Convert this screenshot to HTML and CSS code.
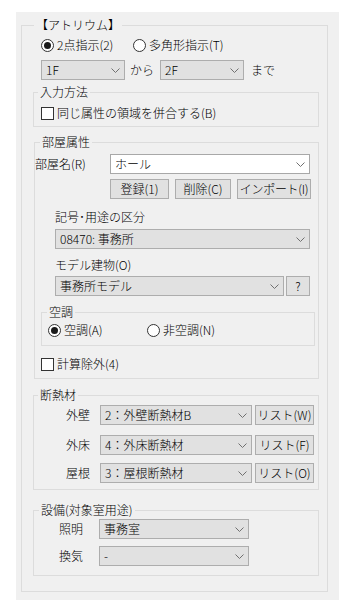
FILE: index.html
```html
<!DOCTYPE html>
<html lang="ja">
<head>
<meta charset="utf-8">
<link rel="stylesheet" href="styles.css">
</head>
<body>
<div class="panel">
  <fieldset class="grp g-outer">
    <legend class="lg lg-outer">【アトリウム】</legend>
    <div class="row r-mode">
      <label class="opt opt-first"><span class="radio on"></span>2点指示(2)</label>
      <label class="opt"><span class="radio"></span>多角形指示(T)</label>
    </div>
    <div class="row r-floor">
      <div class="combo c-floor"><span>1F</span><svg class="chev" width="9" height="5" viewBox="0 0 9 5"><path d="M0.5 0.5 L4.5 4.5 L8.5 0.5" fill="none" stroke="#707070"/></svg></div>
      <span class="t-kara">から</span>
      <div class="combo c-floor"><span>2F</span><svg class="chev" width="9" height="5" viewBox="0 0 9 5"><path d="M0.5 0.5 L4.5 4.5 L8.5 0.5" fill="none" stroke="#707070"/></svg></div>
      <span class="t-made">まで</span>
    </div>

    <fieldset class="grp g-input">
      <legend class="lg lg-input">入力方法</legend>
      <label class="opt r-merge"><span class="check"></span>同じ属性の領域を併合する(B)</label>
    </fieldset>

    <fieldset class="grp g-room">
      <legend class="lg lg-room">部屋属性</legend>
      <div class="row r-name">
        <span class="lbl-name">部屋名(R)</span>
        <div class="combo white c-name"><span>ホール</span><svg class="chev" width="9" height="5" viewBox="0 0 9 5"><path d="M0.5 0.5 L4.5 4.5 L8.5 0.5" fill="none" stroke="#707070"/></svg></div>
      </div>
      <div class="row r-btns">
        <button class="btn b-reg">登録(1)</button>
        <button class="btn b-del">削除(C)</button>
        <button class="btn b-imp">インポート(I)</button>
      </div>
      <div class="sub-lbl s-use">記号･用途の区分</div>
      <div class="combo c-use"><span>08470: 事務所</span><svg class="chev" width="9" height="5" viewBox="0 0 9 5"><path d="M0.5 0.5 L4.5 4.5 L8.5 0.5" fill="none" stroke="#707070"/></svg></div>
      <div class="sub-lbl s-model">モデル建物(O)</div>
      <div class="row r-model">
        <div class="combo c-model"><span>事務所モデル</span><svg class="chev" width="9" height="5" viewBox="0 0 9 5"><path d="M0.5 0.5 L4.5 4.5 L8.5 0.5" fill="none" stroke="#707070"/></svg></div>
        <button class="btn b-q">?</button>
      </div>

      <fieldset class="grp g-air">
        <legend class="lg lg-air">空調</legend>
        <div class="row r-air">
          <label class="opt opt-air"><span class="radio on"></span>空調(A)</label>
          <label class="opt"><span class="radio"></span>非空調(N)</label>
        </div>
      </fieldset>

      <label class="opt r-excl"><span class="check"></span>計算除外(4)</label>
    </fieldset>

    <fieldset class="grp g-ins">
      <legend class="lg lg-ins">断熱材</legend>
      <div class="row r-ins r-ins1">
        <span class="lbl-ins">外壁</span>
        <div class="combo c-ins"><span>2：外壁断熱材B</span><svg class="chev" width="9" height="5" viewBox="0 0 9 5"><path d="M0.5 0.5 L4.5 4.5 L8.5 0.5" fill="none" stroke="#707070"/></svg></div>
        <button class="btn b-list">リスト(W)</button>
      </div>
      <div class="row r-ins r-ins2">
        <span class="lbl-ins">外床</span>
        <div class="combo c-ins"><span>4：外床断熱材</span><svg class="chev" width="9" height="5" viewBox="0 0 9 5"><path d="M0.5 0.5 L4.5 4.5 L8.5 0.5" fill="none" stroke="#707070"/></svg></div>
        <button class="btn b-list">リスト(F)</button>
      </div>
      <div class="row r-ins r-ins3">
        <span class="lbl-ins">屋根</span>
        <div class="combo c-ins"><span>3：屋根断熱材</span><svg class="chev" width="9" height="5" viewBox="0 0 9 5"><path d="M0.5 0.5 L4.5 4.5 L8.5 0.5" fill="none" stroke="#707070"/></svg></div>
        <button class="btn b-list">リスト(O)</button>
      </div>
    </fieldset>

    <fieldset class="grp g-eq">
      <legend class="lg lg-eq">設備(対象室用途)</legend>
      <div class="row r-eq r-eq1">
        <span class="lbl-eq">照明</span>
        <div class="combo c-eq"><span>事務室</span><svg class="chev" width="9" height="5" viewBox="0 0 9 5"><path d="M0.5 0.5 L4.5 4.5 L8.5 0.5" fill="none" stroke="#707070"/></svg></div>
      </div>
      <div class="row r-eq r-eq2">
        <span class="lbl-eq">換気</span>
        <div class="combo c-eq"><span>-</span><svg class="chev" width="9" height="5" viewBox="0 0 9 5"><path d="M0.5 0.5 L4.5 4.5 L8.5 0.5" fill="none" stroke="#707070"/></svg></div>
      </div>
    </fieldset>
  </fieldset>
</div>
</body>
</html>
```

FILE: styles.css
```css
* { box-sizing: border-box; }
html, body { margin: 0; padding: 0; background: #ffffff; }
body {
  font-family: "Noto Sans CJK JP", "Noto Sans", sans-serif;
  font-size: 12px;
  font-weight: 300;
  line-height: 14px;
  color: #000;
}
.panel {
  margin: 12px 0 0 16px;
  width: 323px;
  height: 588px;
  background: #f0f0f0;
  padding: 6px 11px 0 5px;
}
.grp {
  margin: 0;
  padding: 0;
  border: 1px solid #dcdcdc;
  min-width: 0;
}
.lg {
  padding: 0 2px;
  line-height: 14px;
  font-size: 12px;
}
.row { display: flex; align-items: center; }
.opt { display: flex; align-items: center; white-space: nowrap; }

.radio {
  width: 13px; height: 13px;
  border: 1px solid #333;
  border-radius: 50%;
  background: #fff;
  margin-right: 3px;
  display: flex; align-items: center; justify-content: center;
  flex: none;
}
.radio.on::after {
  content: "";
  width: 7px; height: 7px;
  border-radius: 50%;
  background: #1a1a1a;
}
.check {
  width: 13px; height: 13px;
  border: 1px solid #333;
  background: #fff;
  margin-right: 3px;
  flex: none;
}

.combo {
  display: flex; align-items: center; justify-content: space-between;
  height: 20px;
  border: 1px solid #adadad;
  background: #e1e1e1;
  padding: 0 4px 0 4px;
  white-space: nowrap;
}
.combo.white { background: #fff; border-color: #a8a8a8; }
.chev { flex: none; }

.btn {
  font-family: inherit;
  font-size: 12px;
  font-weight: 300;
  line-height: 14px;
  color: #000;
  height: 20px;
  padding: 0;
  margin: 0;
  border: 1px solid #adadad;
  background: #e1e1e1;
  border-radius: 0;
  white-space: nowrap;
}

/* outer */
.g-outer { padding: 0 8px 15px 11px; }
.lg-outer { margin-left: 1px; }
.r-mode { margin: 5px 0 0 8px; height: 16px; }
.opt-first { width: 92px; }
.r-floor { margin: 7px 0 0 8px; }
.c-floor { width: 84px; }
.t-kara { margin: 0 6px 0 5px; }
.t-made { margin-left: 7px; }

/* input method */
.g-input { margin-top: 5px; padding: 0 0 6px 0; }
.lg-input { margin-left: 4px; }
.r-merge { margin: 7px 0 0 7px; }

/* room */
.g-room { margin: 8px 0 0 1px; padding: 0 0 7px 0; }
.lg-room { margin-left: 5px; }
.r-name { margin-top: 5px; }
.lbl-name { width: 75px; }
.c-name { width: 200px; }
.r-btns { margin: 5px 0 0 75px; gap: 6px; }
.b-reg { width: 59px; }
.b-del { width: 56px; }
.b-imp { width: 74px; letter-spacing: -0.3px; }
.sub-lbl { margin-left: 20px; }
.s-use { margin-top: 11px; }
.c-use { margin: 5px 0 0 20px; width: 255px; }
.s-model { margin-top: 9px; }
.r-model { margin: 4px 0 0 20px; gap: 2px; }
.c-model { width: 229px; }
.b-q { width: 24px; }

.g-air { margin: 9px 3px 0 6px; padding: 0 0 7px 0; }
.lg-air { margin-left: 5px; }
.r-air { margin: 3px 0 0 6px; height: 16px; }
.opt-air { width: 99px; }

.r-excl { margin: 11px 0 0 6px; }

/* insulation */
.g-ins { margin-top: 9px; padding: 0 0 6px 0; }
.lg-ins { margin-left: 4px; }
.r-ins1 { margin-top: 3px; }
.r-ins2 { margin-top: 10px; }
.r-ins3 { margin-top: 8px; }
.lbl-ins { width: 56px; text-align: right; }
.c-ins { width: 152px; margin-left: 10px; }
.b-list { width: 59px; margin-left: 3px; }

/* equipment */
.g-eq { margin-top: 13px; padding: 0 0 9px 0; }
.lg-eq { margin-left: 5px; }
.r-eq1 { margin-top: 2px; }
.r-eq2 { margin-top: 7px; }
.lbl-eq { width: 49px; text-align: right; }
.c-eq { width: 150px; margin-left: 16px; }
```
